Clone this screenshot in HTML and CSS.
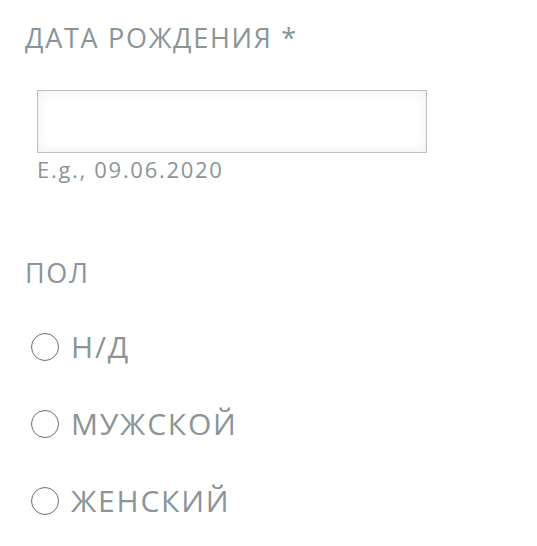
FILE: index.html
```html
<!DOCTYPE html>
<html lang="ru">
<head>
<meta charset="utf-8">
<link rel="stylesheet" href="styles.css">
</head>
<body>
<form class="form">
  <div class="field">
    <label class="label" for="dob">ДАТА РОЖДЕНИЯ *</label>
    <div class="input-wrap">
      <input class="input" id="dob" type="text">
      <div class="hint">E.g., 09.06.2020</div>
    </div>
  </div>
  <fieldset class="group">
    <legend class="label">ПОЛ</legend>
    <label class="radio"><span class="circle"></span><span class="radio-text">Н/Д</span></label>
    <label class="radio"><span class="circle"></span><span class="radio-text">МУЖСКОЙ</span></label>
    <label class="radio"><span class="circle"></span><span class="radio-text">ЖЕНСКИЙ</span></label>
  </fieldset>
</form>
</body>
</html>
```
FILE: styles.css
```css
html, body {
  margin: 0;
  padding: 0;
  background: #ffffff;
}
body {
  font-family: "Open Sans", "Noto Sans", sans-serif;
  color: #8b9497;
}
.form {
  padding: 20px 0 0 25px;
}
.label {
  display: block;
  font-size: 27px;
  line-height: 36px;
  letter-spacing: 1.7px;
  color: #8b9497;
  padding: 0;
}
.input-wrap {
  padding: 34px 0 0 12px;
}
.input {
  display: block;
  box-sizing: border-box;
  width: 390px;
  height: 63px;
  border: 1px solid #bdbdbd;
  background: #ffffff;
  box-shadow: inset 0 0 12px rgba(0, 0, 0, 0.08);
  margin: 0;
  padding: 0;
  outline: none;
}
.hint {
  font-size: 22px;
  line-height: 32px;
  letter-spacing: 1.7px;
  color: #8b9497;
}
.group {
  border: 0;
  margin: 0;
  padding: 0;
  margin-top: 70px;
  display: flex;
  flex-direction: column;
}
.group .label {
  float: left;
  width: 100%;
  margin-bottom: 32px;
}
.radio {
  display: flex;
  align-items: center;
  gap: 12px;
  height: 48px;
  margin-bottom: 29px;
  padding-left: 6px;
}
.circle {
  width: 26px;
  height: 26px;
  border: 1px solid #6e6e6e;
  border-radius: 50%;
  flex: none;
}
.radio-text {
  font-size: 30px;
  line-height: 40px;
  letter-spacing: 1.8px;
  color: #8b9497;
}
```
